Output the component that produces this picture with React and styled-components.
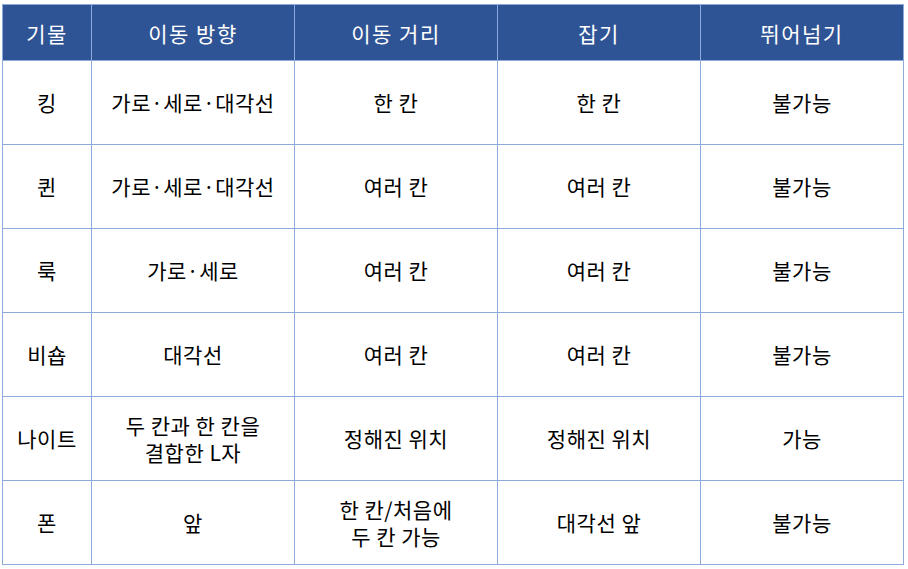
import React from 'react';
import styled, { createGlobalStyle } from 'styled-components';

const GlobalStyle = createGlobalStyle`
	body {
		margin: 0;
		background: #ffffff;
		font-family: 'Noto Sans CJK KR', 'Noto Sans', sans-serif;
	}
`;

const HEADERS = ['기물', '이동 방향', '이동 거리', '잡기', '뛰어넘기'];

const ROWS = [
	['킹', '가로·세로·대각선', '한 칸', '한 칸', '불가능'],
	['퀸', '가로·세로·대각선', '여러 칸', '여러 칸', '불가능'],
	['룩', '가로·세로', '여러 칸', '여러 칸', '불가능'],
	['비숍', '대각선', '여러 칸', '여러 칸', '불가능'],
	['나이트', '두 칸과 한 칸을\n결합한 L자', '정해진 위치', '정해진 위치', '가능'],
	['폰', '앞', '한 칸/처음에\n두 칸 가능', '대각선 앞', '불가능'],
];

const COL_WIDTHS = [89, 203, 203, 203, 203];

function App() {
	return (
		<Page>
			<GlobalStyle />
			<Table>
				<colgroup>
					{COL_WIDTHS.map((w, i) => (
						<col key={i} style={{ width: w }} />
					))}
				</colgroup>
				<thead>
					<tr>
						{HEADERS.map(h => (
							<HeadCell key={h}>{h}</HeadCell>
						))}
					</tr>
				</thead>
				<tbody>
					{ROWS.map(row => (
						<tr key={row[0]}>
							{row.map((cell, i) => (
								<Cell key={i}>{cell}</Cell>
							))}
						</tr>
					))}
				</tbody>
			</Table>
		</Page>
	);
}

export default App;

const Page = styled.div`
	padding: 4px 2px;
`;

const Table = styled.table`
	border-collapse: collapse;
	table-layout: fixed;
	width: 902px;
`;

const HeadCell = styled.th`
	height: 55px;
	padding: 0;
	background: #2f5496;
	color: #ffffff;
	font-weight: 400;
	font-size: 21px;
	letter-spacing: 1.5px;
	text-align: center;
	vertical-align: middle;
	border: 1px solid #8eaadb;
`;

const Cell = styled.td`
	height: 83px;
	padding: 0;
	color: #000000;
	font-size: 21px;
	line-height: 27px;
	letter-spacing: 0.5px;
	white-space: pre-line;
	text-align: center;
	vertical-align: middle;
	border: 1px solid #8eaadb;
`;
